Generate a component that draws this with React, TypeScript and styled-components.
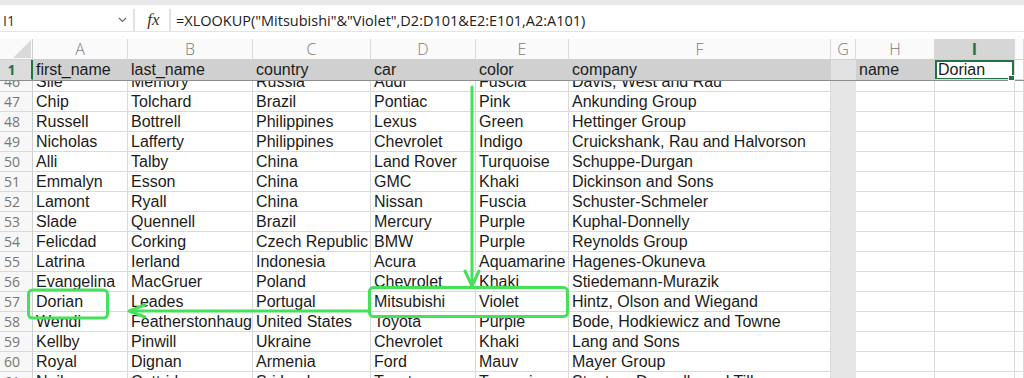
import React from 'react';
import styled, { createGlobalStyle, css } from 'styled-components';

// column widths: row header, A..I, and a sliver of J
const COLS = [33, 95, 125, 118, 105, 93, 262, 25, 79, 80, 9];
const TEMPLATE = COLS.map((w) => `${w}px`).join(' ');
const LETTERS = ['A', 'B', 'C', 'D', 'E', 'F', 'G', 'H', 'I', ''];

const EXCEL_GREEN = '#217346';
const MARKER = '#46e05a';
const GRID = '#dadada';
const FROZEN_FILL = '#d0d0d0';
const G_FILL = '#e6e6e6';

const DATA: [number, string[]][] = [
  [46, ['Slie', 'Memory', 'Russia', 'Audi', 'Fuscia', 'Davis, West and Rau']],
  [47, ['Chip', 'Tolchard', 'Brazil', 'Pontiac', 'Pink', 'Ankunding Group']],
  [48, ['Russell', 'Bottrell', 'Philippines', 'Lexus', 'Green', 'Hettinger Group']],
  [49, ['Nicholas', 'Lafferty', 'Philippines', 'Chevrolet', 'Indigo', 'Cruickshank, Rau and Halvorson']],
  [50, ['Alli', 'Talby', 'China', 'Land Rover', 'Turquoise', 'Schuppe-Durgan']],
  [51, ['Emmalyn', 'Esson', 'China', 'GMC', 'Khaki', 'Dickinson and Sons']],
  [52, ['Lamont', 'Ryall', 'China', 'Nissan', 'Fuscia', 'Schuster-Schmeler']],
  [53, ['Slade', 'Quennell', 'Brazil', 'Mercury', 'Purple', 'Kuphal-Donnelly']],
  [54, ['Felicdad', 'Corking', 'Czech Republic', 'BMW', 'Purple', 'Reynolds Group']],
  [55, ['Latrina', 'Ierland', 'Indonesia', 'Acura', 'Aquamarine', 'Hagenes-Okuneva']],
  [56, ['Evangelina', 'MacGruer', 'Poland', 'Chevrolet', 'Khaki', 'Stiedemann-Murazik']],
  [57, ['Dorian', 'Leades', 'Portugal', 'Mitsubishi', 'Violet', 'Hintz, Olson and Wiegand']],
  [58, ['Wendi', 'Featherstonhaugh', 'United States', 'Toyota', 'Purple', 'Bode, Hodkiewicz and Towne']],
  [59, ['Kellby', 'Pinwill', 'Ukraine', 'Chevrolet', 'Khaki', 'Lang and Sons']],
  [60, ['Royal', 'Dignan', 'Armenia', 'Ford', 'Mauv', 'Mayer Group']],
  [61, ['Neil', 'Cottridge', 'Sri Lanka', 'Toyota', 'Turquoise', 'Stanton, Donnelly and Tillman']],
];

const HEADER_ROW = ['first_name', 'last_name', 'country', 'car', 'color', 'company'];

const GlobalStyle = createGlobalStyle`
  html, body {
    margin: 0;
    padding: 0;
    background: #ffffff;
  }
  * {
    box-sizing: border-box;
  }
`;

const Page = styled.div`
  position: relative;
  width: 1024px;
  height: 378px;
  overflow: hidden;
  display: flex;
  flex-direction: column;
  background: #ffffff;
`;

const TopStrip = styled.div`
  height: 5px;
  background: #e9e9e9;
`;

const FormulaBar = styled.div`
  display: flex;
  align-items: stretch;
  height: 27px;
  padding-top: 4px;
  border-bottom: 1px solid #e4e4e4;
`;

const NameBox = styled.div`
  width: 135px;
  display: flex;
  align-items: center;
  justify-content: space-between;
  padding: 0 6px 0 3px;
  font-family: 'Open Sans', 'Noto Sans', sans-serif;
  font-size: 14px;
  color: #333;
  border-right: 2px solid #e2e2e2;
`;

const FxBox = styled.div`
  width: 36px;
  display: flex;
  align-items: center;
  justify-content: center;
  padding-left: 3px;
  font-family: 'Liberation Serif', serif;
  font-style: italic;
  font-size: 17px;
  color: #333;
  border-right: 2px solid #e2e2e2;
`;

const FormulaText = styled.div`
  display: flex;
  align-items: center;
  padding-left: 5px;
  font-family: 'Open Sans', 'Noto Sans', sans-serif;
  font-size: 14.5px;
  color: #222;
  white-space: nowrap;
`;

const Gap = styled.div`
  height: 7px;
`;

const SheetRow = styled.div`
  display: grid;
  grid-template-columns: ${TEMPLATE};
`;

const Corner = styled.div`
  height: 21px;
  display: flex;
  align-items: flex-end;
  justify-content: flex-end;
  padding: 0 1px 1px 0;
  border-right: 1px solid #cfcfcf;
  border-bottom: 1px solid #cfcfcf;
  background: #fafafa;
`;

const ColHead = styled.div<{ $active?: boolean }>`
  height: 21px;
  line-height: 20px;
  text-align: center;
  font-family: 'Open Sans', 'Noto Sans', sans-serif;
  font-weight: 300;
  font-size: 16px;
  color: #7a7a7a;
  background: #fafafa;
  border-right: 1px solid ${GRID};
  border-bottom: 1px solid #cfcfcf;
  ${({ $active }) =>
    $active &&
    css`
      background: #d6d6d6;
      color: ${EXCEL_GREEN};
      font-weight: 700;
    `}
`;

const RowHead = styled.div<{ $active?: boolean }>`
  height: 20px;
  line-height: 19px;
  text-align: center;
  padding-right: 8px;
  font-family: 'Open Sans', 'Noto Sans', sans-serif;
  font-size: 14px;
  color: #767676;
  background: #f7f7f7;
  border-right: 1px solid #cfcfcf;
  border-bottom: 1px solid ${GRID};
  ${({ $active }) =>
    $active &&
    css`
      background: #dcdcdc;
      color: ${EXCEL_GREEN};
      font-weight: 700;
      border-right: 2px solid ${EXCEL_GREEN};
      border-bottom-color: #dcdcdc;
    `}
`;

const Cell = styled.div<{ $fill?: string; $selected?: boolean }>`
  position: relative;
  height: 20px;
  line-height: 20px;
  padding: 0 3px;
  font-family: 'Liberation Sans', Arial, sans-serif;
  font-size: 16px;
  color: #1c1c1c;
  white-space: nowrap;
  overflow: hidden;
  border-right: 1px solid ${({ $fill }) => $fill || GRID};
  border-bottom: 1px solid ${({ $fill }) => $fill || GRID};
  background: ${({ $fill }) => $fill || '#ffffff'};
  ${({ $selected }) =>
    $selected &&
    css`
      overflow: visible;
      box-shadow: inset 2px 2px 0 ${EXCEL_GREEN}, inset -2px -1px 0 ${EXCEL_GREEN};
      &::after {
        content: '';
        position: absolute;
        right: -1px;
        bottom: -2px;
        width: 5px;
        height: 4px;
        background: ${EXCEL_GREEN};
        border: 1px solid #fff;
      }
    `}
`;

const FreezeLine = styled.div`
  height: 1px;
  background: #8d8d8d;
`;

const Body = styled.div`
  flex: 1;
  overflow: hidden;
`;

const ScrolledRows = styled.div`
  margin-top: -9px;
`;

const Overlay = styled.svg`
  position: absolute;
  top: 0;
  left: 0;
  pointer-events: none;
`;

const ChevronDown = () => (
  <svg width="9" height="6" viewBox="0 0 9 6">
    <path d="M1 1 L4.5 4.5 L8 1" fill="none" stroke="#666" strokeWidth="1.1" />
  </svg>
);

const CornerTriangle = () => (
  <svg width="18" height="18" viewBox="0 0 18 18">
    <polygon points="18,0 18,18 0,18" fill="#d9d9d9" />
  </svg>
);

const fillFor = (col: number) => (col === 6 ? G_FILL : undefined);

const App: React.FC = () => {
  return (
    <Page>
      <GlobalStyle />
      <TopStrip />
      <FormulaBar>
        <NameBox>
          <span>I1</span>
          <ChevronDown />
        </NameBox>
        <FxBox>fx</FxBox>
        <FormulaText>=XLOOKUP("Mitsubishi"&amp;"Violet",D2:D101&amp;E2:E101,A2:A101)</FormulaText>
      </FormulaBar>
      <Gap />

      <SheetRow>
        <Corner>
          <CornerTriangle />
        </Corner>
        {LETTERS.map((l, i) => (
          <ColHead key={i} $active={l === 'I'}>
            {l}
          </ColHead>
        ))}
      </SheetRow>

      {/* frozen header row */}
      <SheetRow>
        <RowHead $active>1</RowHead>
        {HEADER_ROW.map((h) => (
          <Cell key={h} $fill={FROZEN_FILL}>
            {h}
          </Cell>
        ))}
        <Cell $fill="#e2e2e2" />
        <Cell $fill={FROZEN_FILL}>name</Cell>
        <Cell $selected>Dorian</Cell>
        <Cell />
      </SheetRow>
      <FreezeLine />

      <Body>
        <ScrolledRows>
          {DATA.map(([n, values]) => (
            <SheetRow key={n}>
              <RowHead>{n}</RowHead>
              {[...values, '', '', '', ''].map((v, i) => (
                <Cell key={i} $fill={fillFor(i)}>
                  {v}
                </Cell>
              ))}
            </SheetRow>
          ))}
        </ScrolledRows>
      </Body>

      <Overlay width="1024" height="378" viewBox="0 0 1024 378">
        <g fill="none" stroke={MARKER} strokeWidth="3" strokeLinecap="round" strokeLinejoin="round">
          {/* lookup arrow down the color column */}
          <line x1="472" y1="87" x2="472" y2="285" />
          <polyline points="465,271 472,286 479,271" />
          {/* matched Mitsubishi & Violet */}
          <rect x="369.5" y="287.5" width="198" height="29" rx="4" />
          {/* result arrow back to first_name */}
          <line x1="368" y1="311" x2="130" y2="311" />
          <polyline points="145,305 129,311 145,317" />
          {/* returned value */}
          <rect x="28.5" y="290" width="79" height="28" rx="4" />
        </g>
      </Overlay>
    </Page>
  );
};

export default App;
